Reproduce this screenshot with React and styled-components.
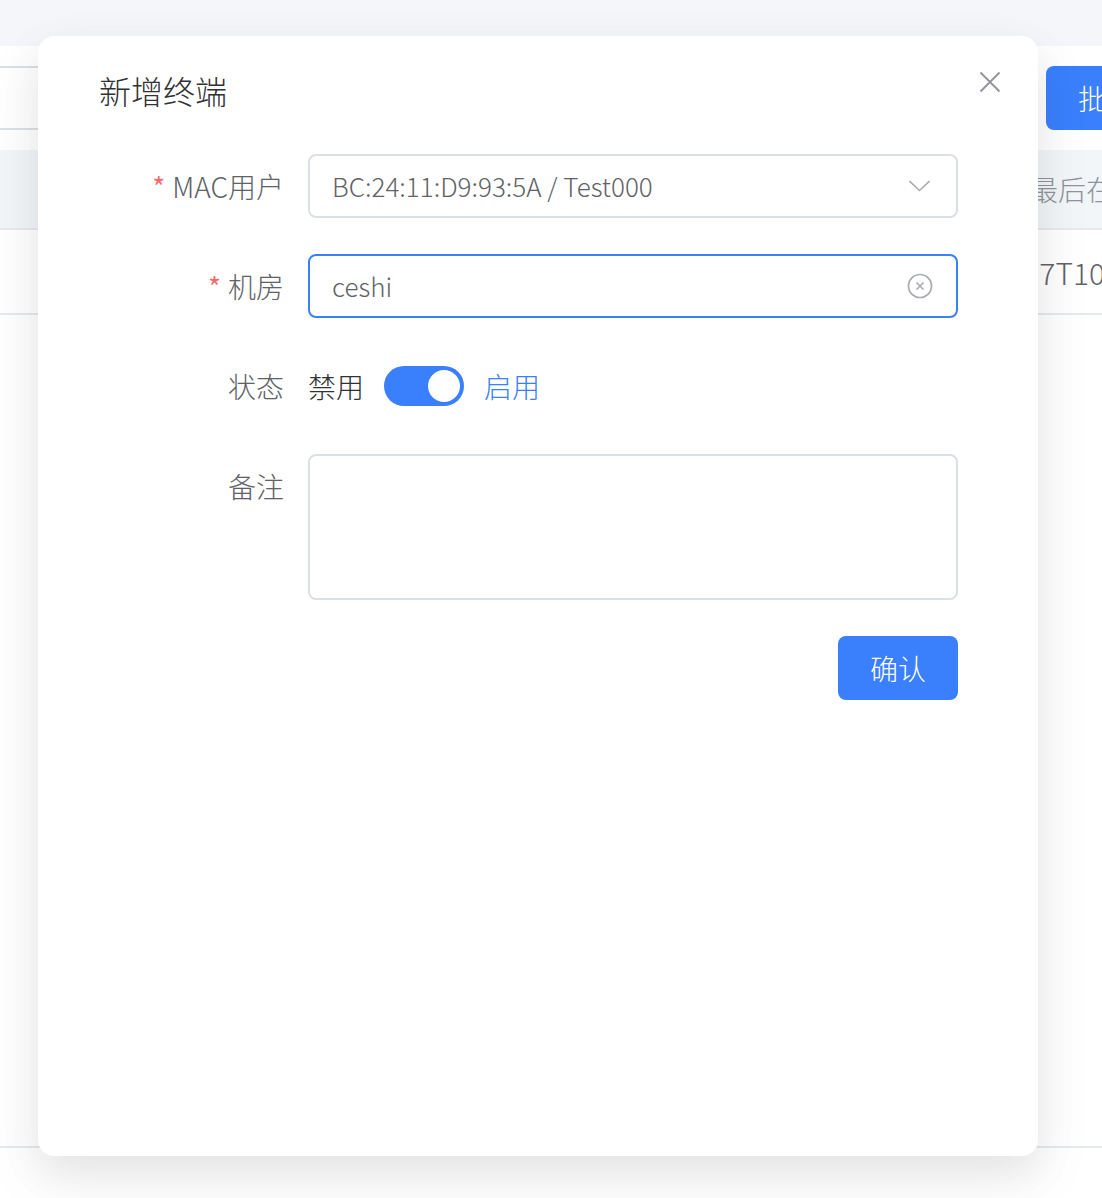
import React from 'react';
import styled, { createGlobalStyle } from 'styled-components';

const FONT = '"Noto Sans CJK SC", "Noto Sans", sans-serif';

const GlobalStyle = createGlobalStyle`
  html, body {
    margin: 0;
    padding: 0;
    background: #fff;
  }
  body {
    font-family: ${FONT};
    font-weight: 300;
    overflow: hidden;
  }
`;

const Page = styled.div`
  position: relative;
  width: 1102px;
  height: 1198px;
  overflow: hidden;
  background: #f4f6fa;
  padding-top: 46px;
  box-sizing: border-box;
`;

const Card = styled.div`
  height: 1152px;
  background: #fff;
  overflow: hidden;
`;

const Toolbar = styled.div`
  display: flex;
  justify-content: space-between;
  padding-top: 20px;
  height: 64px;
`;

const SearchBox = styled.div`
  width: 60px;
  height: 64px;
  box-sizing: border-box;
  border-top: 2px solid #dcdfe6;
  border-bottom: 2px solid #dcdfe6;
`;

const BatchButton = styled.button`
  flex: none;
  width: 170px;
  height: 64px;
  margin-right: -114px;
  padding: 0 0 0 32px;
  border: 0;
  border-radius: 8px;
  background: #3a7ffc;
  color: #fff;
  font: 300 28px ${FONT};
  text-align: left;
  white-space: nowrap;
  overflow: hidden;
`;

const TableHead = styled.div`
  height: 80px;
  margin-top: 20px;
  box-sizing: border-box;
  border-bottom: 2px solid #e6e9f0;
  background: #f3f6f9;
  color: #909399;
  font-size: 28px;
  line-height: 78px;
  padding-left: 1030px;
  white-space: nowrap;
  overflow: hidden;
`;

const TableRow = styled.div`
  height: 85px;
  box-sizing: border-box;
  border-bottom: 2px solid #e6e9f0;
  color: #606266;
  font-size: 30px;
  line-height: 84px;
  padding-left: ${p => p.$indent}px;
  white-space: nowrap;
  overflow: hidden;
`;

const TableBody = styled.div`
  height: 833px;
  box-sizing: border-box;
  border-bottom: 2px solid #e6e9f0;
`;

const Dialog = styled.div`
  position: absolute;
  left: 38px;
  top: 36px;
  width: 1000px;
  height: 1120px;
  box-sizing: border-box;
  padding: 30px 80px 0 61px;
  border-radius: 16px;
  background: #fff;
  box-shadow: 0 24px 64px 8px rgba(0, 0, 0, .04), 0 16px 40px rgba(0, 0, 0, .08);
`;

const Title = styled.h2`
  margin: 0 0 40px;
  height: 48px;
  font-size: 32px;
  font-weight: 300;
  line-height: 48px;
  color: #303133;
`;

const CloseButton = styled.button`
  position: absolute;
  top: 34px;
  right: 36px;
  width: 24px;
  height: 24px;
  padding: 0;
  border: 0;
  background: none;
  color: #909399;
  display: flex;
`;

const Row = styled.div`
  display: flex;
  margin-bottom: ${p => p.$gap ?? 36}px;
`;

const Label = styled.label`
  flex: none;
  width: 185px;
  height: 64px;
  text-align: right;
  font-size: 28px;
  line-height: 64px;
  color: #606266;
  white-space: nowrap;

  ${p => p.$required && `
    &::before {
      content: '*';
      color: #f56c6c;
      font-weight: 400;
      margin-right: 7px;
    }
  `}
`;

const Control = styled.div`
  width: 650px;
  margin-left: 24px;
  display: flex;
  align-items: center;
`;

const Field = styled.div`
  flex: 1;
  height: 64px;
  box-sizing: border-box;
  display: flex;
  align-items: center;
  justify-content: space-between;
  padding: 0 24px 0 22px;
  border: 2px solid ${p => (p.$focus ? '#3a7ffc' : '#dcdfe6')};
  border-radius: 8px;
  color: #909399;
`;

const FieldInput = styled.input`
  flex: 1;
  min-width: 0;
  padding: 0 0 2px;
  border: 0;
  outline: 0;
  background: none;
  font: 300 26px ${FONT};
  color: #606266;
`;

const StateText = styled.span`
  font-size: 28px;
  line-height: 64px;
  color: ${p => (p.$on ? '#3a7ffc' : '#303133')};
`;

const Switch = styled.span`
  width: 80px;
  height: 40px;
  margin: 0 20px;
  box-sizing: border-box;
  padding: 4px;
  display: flex;
  justify-content: flex-end;
  border-radius: 20px;
  background: #3a7ffc;

  &::after {
    content: '';
    width: 32px;
    height: 32px;
    border-radius: 50%;
    background: #fff;
  }
`;

const Note = styled.textarea`
  flex: 1;
  height: 146px;
  box-sizing: border-box;
  padding: 10px 24px;
  border: 2px solid #dcdfe6;
  border-radius: 8px;
  outline: 0;
  resize: none;
  font: 300 26px ${FONT};
  color: #606266;
`;

const Actions = styled.div`
  display: flex;
  justify-content: flex-end;
`;

const Confirm = styled.button`
  width: 120px;
  height: 64px;
  border: 0;
  border-radius: 8px;
  background: #3a7ffc;
  color: #fff;
  font: 300 28px ${FONT};
`;

const ChevronSvg = styled.svg`
  margin-right: 2px;
`;

const ClearSvg = styled.svg`
  margin-right: -1px;
`;

function CloseIcon() {
  return (
    <svg width="24" height="24" viewBox="0 0 24 24" fill="none" stroke="currentColor" strokeWidth="1.8">
      <path d="M2.5 2.5 21.500 21.500M21.500 2.500 2.500 21.500" />
    </svg>
  );
}

function ChevronIcon() {
  return (
    <ChevronSvg width="21" height="12" viewBox="0 0 21 12" fill="none" stroke="#a8abb2" strokeWidth="1.6">
      <path d="M.5 1 10.500 10.500 20.500 1" />
    </ChevronSvg>
  );
}

function ClearIcon() {
  return (
    <ClearSvg width="26" height="26" viewBox="0 0 26 26" fill="none" stroke="#a8abb2" strokeWidth="1.7">
      <circle cx="13" cy="13" r="11.500" />
      <path d="M9.500 9.500 16.500 16.500M16.500 9.500 9.500 16.500" />
    </ClearSvg>
  );
}

export default function App() {
  return (
    <Page>
      <GlobalStyle />
      <Card>
        <Toolbar>
          <SearchBox />
          <BatchButton>批量导入</BatchButton>
        </Toolbar>
        <TableHead>最后在线时间</TableHead>
        <TableRow $indent={907}>2024-10-17T10:00:00</TableRow>
        <TableBody />
      </Card>

      <Dialog>
        <Title>新增终端</Title>
        <CloseButton aria-label="关闭"><CloseIcon /></CloseButton>

        <Row>
          <Label $required>MAC用户</Label>
          <Control>
            <Field>
              <FieldInput readOnly value="BC:24:11:D9:93:5A / Test000" />
              <ChevronIcon />
            </Field>
          </Control>
        </Row>

        <Row>
          <Label $required>机房</Label>
          <Control>
            <Field $focus>
              <FieldInput readOnly value="ceshi" />
              <ClearIcon />
            </Field>
          </Control>
        </Row>

        <Row>
          <Label>状态</Label>
          <Control>
            <StateText>禁用</StateText>
            <Switch />
            <StateText $on>启用</StateText>
          </Control>
        </Row>

        <Row>
          <Label>备注</Label>
          <Control>
            <Note readOnly />
          </Control>
        </Row>

        <Actions>
          <Confirm>确认</Confirm>
        </Actions>
      </Dialog>
    </Page>
  );
}
